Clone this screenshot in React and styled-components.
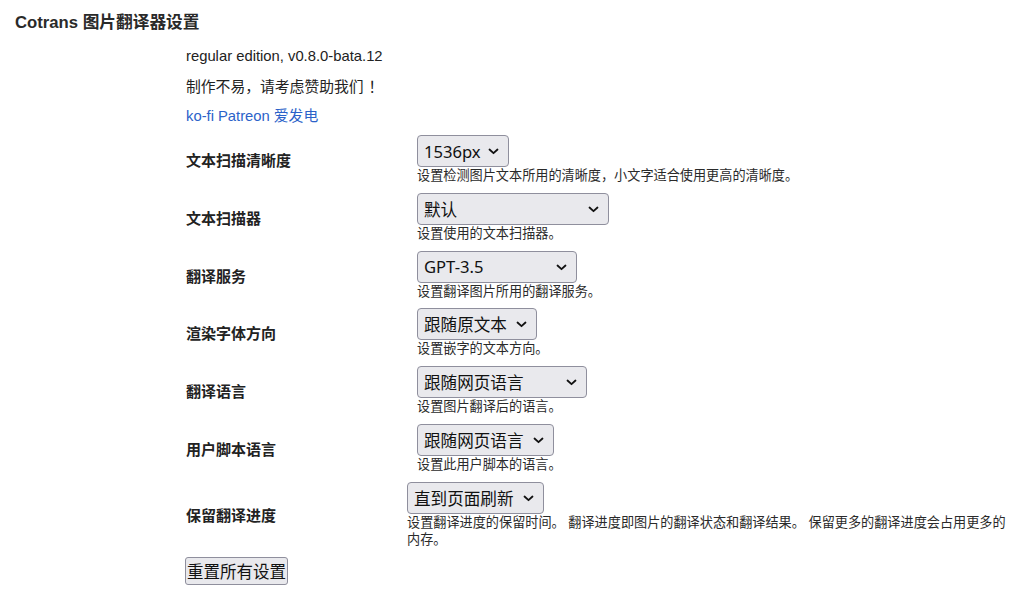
import styled, { createGlobalStyle } from "styled-components";

const Global = createGlobalStyle`
    body {
        margin: 0;
        background: #fff;
        color: #222;
        font-family: "Liberation Sans", "Noto Sans CJK SC", sans-serif;
    }
`;

const Page = styled.div`
    padding: 12px 0 0 15px;
`;
const Title = styled.h1`
    margin: 0;
    font-size: 16.7px;
    font-weight: 700;
    line-height: 22px;
    color: #2a2a2a;
`;
const Body = styled.div`
    margin: 7px 0 0 171px;
    display: flex;
    flex-direction: column;
`;
const Info = styled.p`
    margin: 0;
    font-size: 14.8px;
    line-height: 30px;
    color: #222;
    font-family: ${(p) => (p.$cjk ? `"Noto Sans CJK SC", sans-serif` : `"Liberation Sans", "Noto Sans CJK SC", sans-serif`)};
`;
const Bang = styled.span`
    margin-left: 5px;
`;
const Link = styled.a`
    color: #2b62c9;
    text-decoration: none;
    margin-right: 4px;
`;
const Rows = styled.div`
    display: flex;
    flex-direction: column;
    gap: 8.8px;
    margin-top: 4px;
`;
const Row = styled.div`
    display: grid;
    grid-template-columns: ${(p) => p.$label}px 1fr;
    align-items: center;
    padding-right: 20px;
`;
const Label = styled.div`
    font-size: 15px;
    font-weight: 700;
    color: #222;
`;
const Control = styled.div`
    display: flex;
    flex-direction: column;
    align-items: flex-start;
`;
const SelectBox = styled.div`
    position: relative;
    width: ${(p) => p.$w}px;
    height: 32px;
    box-sizing: border-box;
    border: 1px solid #8f8f9d;
    border-radius: 4px;
    background: #e9e9ed;
    display: flex;
    align-items: center;
    padding: 0 24px 0 6px;
    font-family: "Noto Sans", "Noto Sans CJK SC", sans-serif;
    font-size: 16.6px;
    color: #111;
    white-space: nowrap;
`;
const Chevron = styled.svg`
    position: absolute;
    right: 9px;
    top: 12px;
`;
const Desc = styled.div`
    font-size: 13.15px;
    line-height: 17px;
    color: #2a2a2a;
`;
const ResetButton = styled.button`
    margin-top: 9px;
    align-self: flex-start;
    height: 28px;
    padding: 0 1px;
    border: 1px solid #8f8f9d;
    border-radius: 3px;
    background: #e9e9ed;
    font-family: "Noto Sans CJK SC", sans-serif;
    font-size: 16.5px;
    color: #111;
    line-height: 26px;
    margin-left: -1px;
`;

const settings = [
    { label: "文本扫描清晰度", value: "1536px", w: 92, desc: "设置检测图片文本所用的清晰度，小文字适合使用更高的清晰度。" },
    { label: "文本扫描器", value: "默认", w: 192, desc: "设置使用的文本扫描器。" },
    { label: "翻译服务", value: "GPT-3.5", w: 160, desc: "设置翻译图片所用的翻译服务。" },
    { label: "渲染字体方向", value: "跟随原文本", w: 120, desc: "设置嵌字的文本方向。" },
    { label: "翻译语言", value: "跟随网页语言", w: 170, desc: "设置图片翻译后的语言。" },
    { label: "用户脚本语言", value: "跟随网页语言", w: 137, desc: "设置此用户脚本的语言。" },
    {
        label: "保留翻译进度",
        value: "直到页面刷新",
        w: 137,
        labelW: 221,
        desc: "设置翻译进度的保留时间。 翻译进度即图片的翻译状态和翻译结果。 保留更多的翻译进度会占用更多的内存。",
    },
];

function Select({ value, w }) {
    return (
        <SelectBox $w={w}>
            {value}
            <Chevron width="11" height="7" viewBox="0 0 11 7">
                <path d="M1.5 1.5 L5.5 5.2 L9.5 1.5" fill="none" stroke="#111" strokeWidth="1.8" strokeLinecap="round" strokeLinejoin="round" />
            </Chevron>
        </SelectBox>
    );
}

export default function App() {
    return (
        <Page>
            <Global />
            <Title>Cotrans 图片翻译器设置</Title>
            <Body>
                <Info>regular edition, v0.8.0-bata.12</Info>
                <Info $cjk>制作不易，请考虑赞助我们<Bang>！</Bang></Info>
                <Info>
                    <Link href="#">ko-fi</Link>
                    <Link href="#">Patreon</Link>
                    <Link href="#">爱发电</Link>
                </Info>
                <Rows>
                    {settings.map((s) => (
                        <Row key={s.label} $label={s.labelW || 231}>
                            <Label>{s.label}</Label>
                            <Control>
                                <Select value={s.value} w={s.w} />
                                <Desc>{s.desc}</Desc>
                            </Control>
                        </Row>
                    ))}
                </Rows>
                <ResetButton>重置所有设置</ResetButton>
            </Body>
        </Page>
    );
}
